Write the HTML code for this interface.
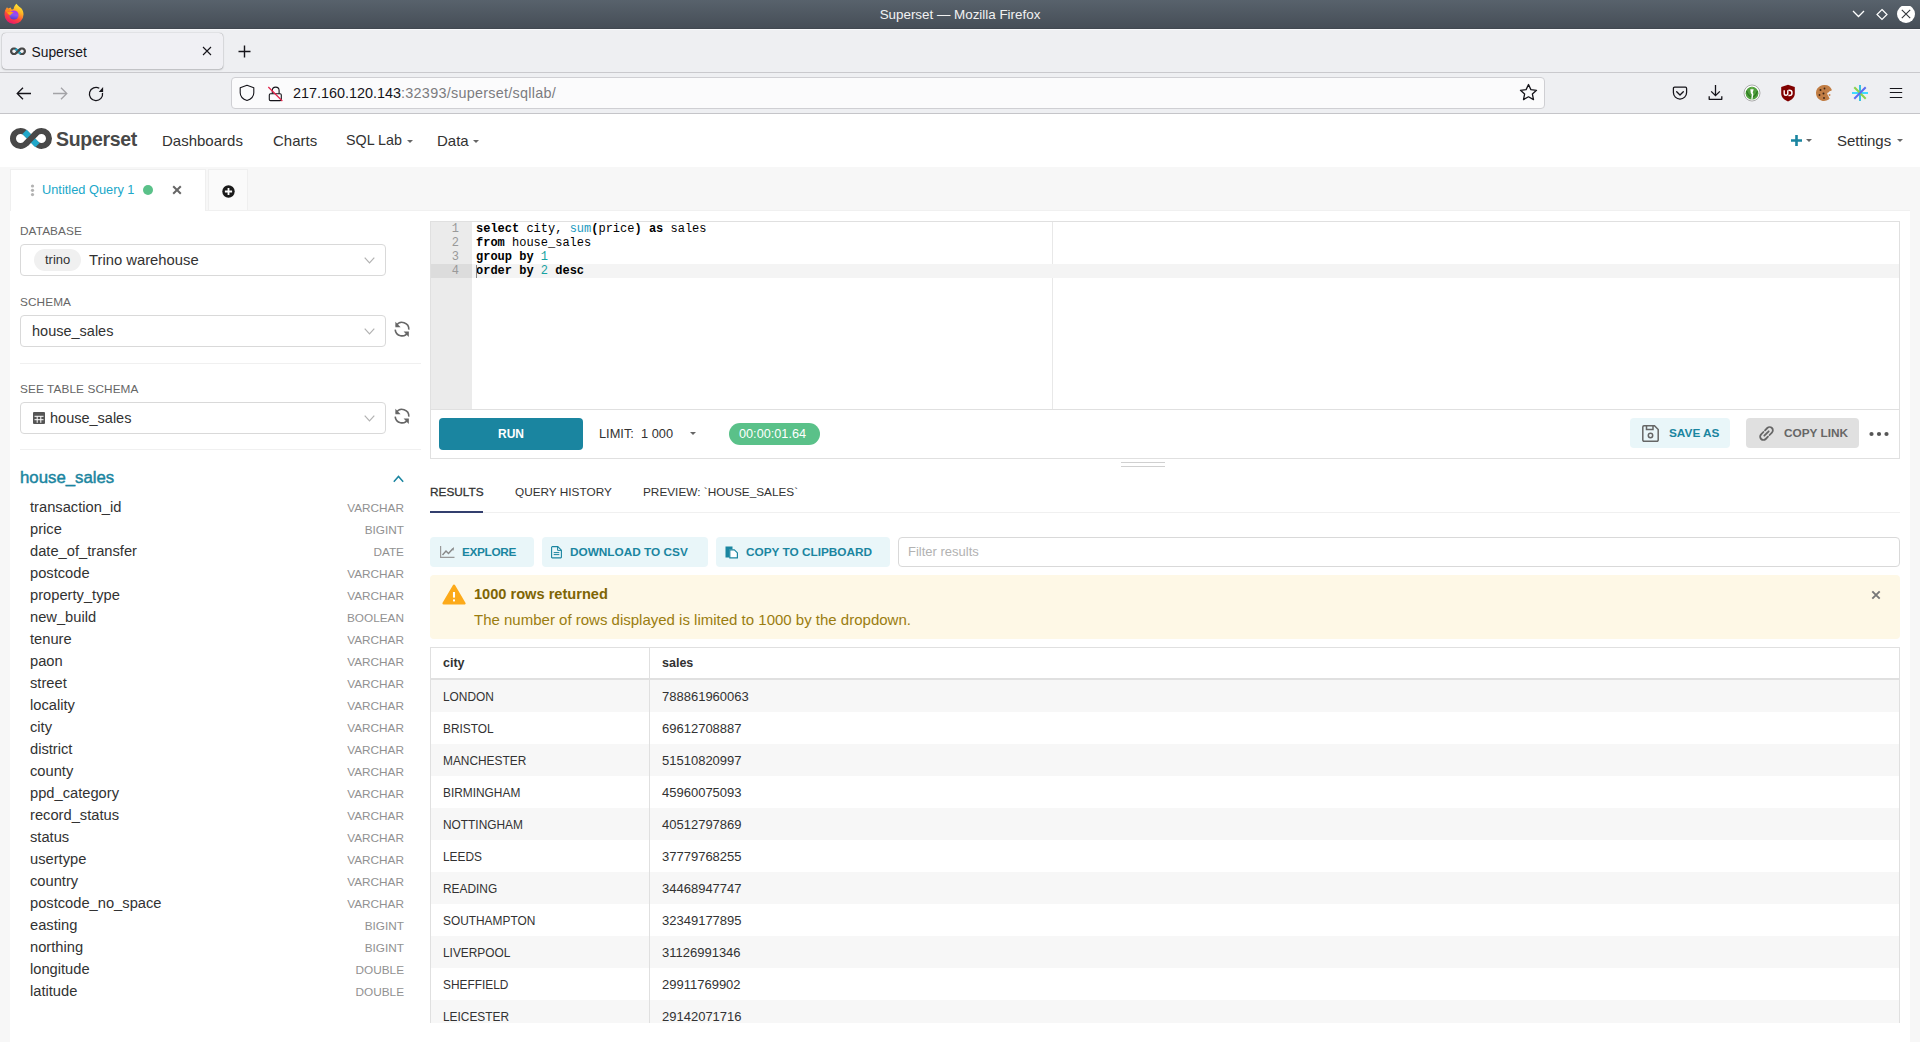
<!DOCTYPE html>
<html><head><meta charset="utf-8">
<style>
*{box-sizing:border-box;margin:0;padding:0}
html,body{width:1920px;height:1042px;overflow:hidden;background:#f7f7f7;font-family:"Liberation Sans",sans-serif;color:#323232}
.a{position:absolute}
.t{position:absolute;white-space:pre;line-height:1}
/* firefox chrome */
#titlebar{left:0;top:0;width:1920px;height:29px;background:linear-gradient(#58626c,#464e57);border-bottom:1px solid #414850}
#tabbar{left:0;top:29px;width:1920px;height:44px;background:#eeeff2;border-top:1px solid #f9f9fb;border-bottom:1px solid #c9c9cd}
#navbar{left:0;top:73px;width:1920px;height:41px;background:#eeeff2;border-bottom:1px solid #c5c5c9}
#ffTab{left:2px;top:33px;width:221px;height:36px;background:#f0f0f4;border-radius:4px;box-shadow:0 0 1px rgba(0,0,0,.45),0 1px 2px rgba(0,0,0,.2)}
#urlbar{left:231px;top:77px;width:1314px;height:32px;background:#fbfbfc;border:1px solid #cfcfd3;border-radius:4px}
/* superset header */
#sshead{left:0;top:114px;width:1920px;height:53px;background:#fff}
.menu{font-size:15px;color:#323232}
.lbl{position:absolute;white-space:pre;line-height:1;font-size:11.8px;color:#666;letter-spacing:0.1px}
.sel{position:absolute;left:20px;width:366px;height:32px;border:1px solid #d9d9d9;border-radius:4px;background:#fff}
.chev{position:absolute;left:364px;width:11px;height:7px}
.col{position:absolute;left:30px;white-space:pre;line-height:1;font-size:14.7px;color:#323232}
.typ{position:absolute;right:1516px;white-space:pre;line-height:1;font-size:11.8px;color:#919191}
.code{position:absolute;left:476px;white-space:pre;font-family:"Liberation Mono",monospace;font-size:12px;line-height:14px;color:#000}
.code b{font-weight:700}
.gn{position:absolute;left:431px;width:28px;text-align:right;font-family:"Liberation Mono",monospace;font-size:12px;line-height:14px;color:#999}
.btxt{position:absolute;white-space:pre;line-height:1;font-size:11.8px;font-weight:700}
.rtab{position:absolute;top:486.5px;white-space:pre;line-height:1;font-size:11.8px;color:#323232}
.abtn{position:absolute;top:537px;height:30px;background:#e9f6f9;border-radius:4px}
.cell{position:absolute;white-space:pre;line-height:1;font-size:11.9px;color:#323232;margin-top:1px}
.num{position:absolute;left:662px;white-space:pre;line-height:1;font-size:13px;color:#323232;margin-top:-1px}
.caret{position:absolute;width:0;height:0;border-left:3.3px solid transparent;border-right:3.3px solid transparent;border-top:3.8px solid #666}
/* content */
#white{left:10px;top:210px;width:1900px;height:832px;background:#fff}
</style></head>
<body>
<svg width="0" height="0" style="position:absolute"><defs>
<symbol id="logo" viewBox="0 0 42 21">
<path d="M15.86 5.25L26.14 15.75A7.5 7.5 0 1 0 26.14 5.25L15.86 15.75A7.5 7.5 0 1 1 15.86 5.25Z" fill="none" stroke="#484848" stroke-width="6" stroke-linejoin="round"/>
<path d="M14.5 3.9L27.5 17.1" stroke="#20a7c9" stroke-width="6"/>
<path d="M26.14 5.25L15.86 15.75" stroke="#484848" stroke-width="6"/>
</symbol>
</defs></svg>
<!-- ================= FIREFOX CHROME ================= -->
<div id="titlebar" class="a"></div>
<div class="t" style="left:0;width:1920px;text-align:center;top:7.5px;font-size:13.4px;color:#f2f2f2">Superset — Mozilla Firefox</div>
<div id="tabbar" class="a"></div>
<div id="navbar" class="a"></div>
<div id="ffTab" class="a"></div>
<div id="urlbar" class="a"></div>
<!-- firefox logo -->
<svg class="a" style="left:0;top:0" width="30" height="28" viewBox="0 0 30 28">
<defs><linearGradient id="ffg" x1="0.8" y1="0" x2="0.3" y2="1"><stop offset="0" stop-color="#fff339"/><stop offset="0.35" stop-color="#ffb224"/><stop offset="0.65" stop-color="#ff4a3a"/><stop offset="1" stop-color="#e8136f"/></linearGradient>
<linearGradient id="ffp" x1="0.6" y1="0" x2="0.4" y2="1"><stop offset="0" stop-color="#b52ee8"/><stop offset="0.5" stop-color="#8a55f5"/><stop offset="1" stop-color="#4f3ccc"/></linearGradient></defs>
<path d="M16.5 3.8C18 6 20 7.5 21.5 8.5 23 10.5 23.5 12.5 23.5 14.5A9.5 9.5 0 0 1 4.5 14.5C4.5 11 5.5 9 7 7.2L8.2 8.6 10.6 7.6 11.6 9.4C12.5 9.6 13 9.6 13.6 9.1 14 6.5 15 5 16.5 3.8Z" fill="url(#ffg)"/>
<circle cx="14" cy="15" r="4.6" fill="url(#ffp)"/>
<path d="M6.8 12.4C9 11.6 11.2 11.6 13.9 12.5 12.2 13.3 11 14.2 10.3 15.4 9 14.6 7.8 13.6 6.8 12.4Z" fill="#ffa414"/>
<path d="M5.5 10.5C7 9 9 8.6 11 9.8 9.5 10.4 8 11 6.8 12.4Z" fill="#ff8a1a"/>
</svg>
<!-- window controls -->
<svg class="a" style="left:1850px;top:6px" width="70" height="18" viewBox="0 0 70 18">
<path d="M3 5l5.5 5.5L14 5" fill="none" stroke="#fff" stroke-width="1.3"/>
<path d="M32 3.5l5 5-5 5-5-5z" fill="none" stroke="#fff" stroke-width="1.2"/>
<circle cx="56" cy="8" r="9" fill="#fff"/>
<path d="M51.8 3.8l8.4 8.4M60.2 3.8l-8.4 8.4" stroke="#31363b" stroke-width="1.1"/>
</svg>
<!-- tab content -->
<svg class="a" style="left:10px;top:46.5px" width="16" height="8.5" viewBox="0 0 42 21"><use href="#logo"/></svg>
<div class="t" style="left:31.5px;top:46px;font-size:13.8px;color:#15141a">Superset</div>
<svg class="a" style="left:202px;top:46px" width="10" height="10" viewBox="0 0 10 10"><path d="M1 1l8 8M9 1l-8 8" stroke="#15141a" stroke-width="1.1"/></svg>
<svg class="a" style="left:238px;top:45px" width="13" height="13" viewBox="0 0 13 13"><path d="M6.5 0.5v12M0.5 6.5h12" stroke="#15141a" stroke-width="1.4"/></svg>
<!-- nav buttons -->
<svg class="a" style="left:0;top:73px" width="290" height="40" viewBox="0 73 290 40">
<path d="M17 93.5h14M23 87.7L17.2 93.5 23 99.3" fill="none" stroke="#15141a" stroke-width="1.3"/>
<path d="M53 93.5h14M61 87.7l5.8 5.8-5.8 5.8" fill="none" stroke="#a3a3a7" stroke-width="1.3"/>
<path d="M102.5 92.85A6.6 6.6 0 1 1 99.3 88.28" fill="none" stroke="#15141a" stroke-width="1.3"/>
<path d="M98.8 91.9L103.1 86.9v5z" fill="#15141a"/>
<path d="M247 85.3l-6.8 2.5v4.9c0 3.5 2.6 6.4 6.8 7.8 4.2-1.4 6.8-4.3 6.8-7.8v-4.9z" fill="none" stroke="#15141a" stroke-width="1.1" stroke-linejoin="round"/>
<path d="M272.3 93.8v-3.3a3.4 3.4 0 0 1 6.8 0v3.3" fill="none" stroke="#15141a" stroke-width="1.1"/>
<rect x="269.3" y="93.8" width="12" height="6.8" rx="1.2" fill="none" stroke="#15141a" stroke-width="1.1"/>
<path d="M268.3 87l14 14" stroke="#e2234a" stroke-width="1.2"/>
</svg>
<div class="t" style="left:293px;top:85.5px;font-size:14.4px;color:#15141a">217.160.120.143<span style="color:#7c7c80;letter-spacing:0.27px">:32393/superset/sqllab/</span></div>
<svg class="a" style="left:1519px;top:83px" width="19" height="19" viewBox="0 0 19 19"><path d="M9.5 1.5l2.4 5.1 5.6.7-4.1 3.8 1.1 5.5-5-2.8-5 2.8 1.1-5.5L1.5 7.3l5.6-.7z" fill="none" stroke="#15141a" stroke-width="1.3" stroke-linejoin="round"/></svg>
<!-- right toolbar icons -->
<svg class="a" style="left:1672px;top:86px" width="16" height="15" viewBox="0 0 16 15"><path d="M2.6 1.2h10.8a1.2 1.2 0 0 1 1.2 1.2v4.1a6.6 6.6 0 0 1-13.2 0V2.4a1.2 1.2 0 0 1 1.2-1.2z" fill="none" stroke="#15141a" stroke-width="1.25"/><path d="M4.7 5.8L8 9l3.3-3.2" fill="none" stroke="#15141a" stroke-width="1.35" stroke-linecap="round" stroke-linejoin="round"/></svg>
<svg class="a" style="left:1708px;top:84px" width="15" height="17" viewBox="0 0 15 17"><path d="M7.5 1v10.6M3.2 7.4l4.3 4.3 4.3-4.3" fill="none" stroke="#15141a" stroke-width="1.3"/><path d="M1.2 12.2v3.1h12.6v-3.1" fill="none" stroke="#15141a" stroke-width="1.3" stroke-linejoin="round"/></svg>
<svg class="a" style="left:1743px;top:84px" width="18" height="18" viewBox="0 0 18 18"><circle cx="9" cy="9" r="8" fill="#fff" stroke="#8a8a8a" stroke-width="0.7"/><circle cx="9" cy="9.2" r="6.4" fill="#4e9e3c"/><path d="M3.5 7c1 3 2.5 5 4.5 6M14.5 7c-1 3-2.5 5-4.5 6" fill="none" stroke="#2f7a22" stroke-width="1.2"/><path d="M7.3 5.2h3.4l-1 3.3.7 1.5-1 5.5H8.3l.5-5-1-1.6z" fill="#fff"/><circle cx="9" cy="3.9" r="1.1" fill="#6ab04c"/></svg>
<svg class="a" style="left:1780px;top:84px" width="16" height="18" viewBox="0 0 16 18"><path d="M8 .8L14.8 3v6.2c0 3.8-2.8 6.8-6.8 8.2C4 16 1.2 13 1.2 9.2V3z" fill="#800000"/><path d="M4.2 6.3v3.2a1.8 1.8 0 0 0 3.6 0V6.3" fill="none" stroke="#fff" stroke-width="1.4"/><path d="M8.4 6.3h1a2.6 2.6 0 0 1 0 5.2h-1" fill="none" stroke="#fff" stroke-width="1.4"/></svg>
<svg class="a" style="left:1815px;top:84px" width="18" height="18" viewBox="0 0 18 18"><path d="M9 1a8 8 0 1 0 5.8 13.5c-.6-.4-1-1-.8-1.7-.9-.2-1.3-1-1-1.8-.8-.4-1-1.2-.6-2 .3-.6 1-.9 1.6-.8.2-.8.9-1.3 1.7-1.2.3-.5.8-.8 1.3-.8A8 8 0 0 0 9 1z" fill="#c17d44"/><circle cx="5.5" cy="6" r="1" fill="#3b2314"/><circle cx="9.5" cy="4.5" r=".9" fill="#3b2314"/><circle cx="8.5" cy="9.5" r="1" fill="#3b2314"/><circle cx="4.5" cy="11" r=".9" fill="#3b2314"/><circle cx="9" cy="14" r=".9" fill="#3b2314"/><circle cx="14.5" cy="11" r="1" fill="#c98a55"/></svg>
<svg class="a" style="left:1851px;top:84px" width="18" height="18" viewBox="0 0 18 18"><path d="M9 1v16" stroke="#38c3e0" stroke-width="2"/><path d="M1 9h16" stroke="#3fd9ff" stroke-width="2"/><path d="M3.3 3.3l11.4 11.4" stroke="#8bd24b" stroke-width="2"/><path d="M14.7 3.3L3.3 14.7" stroke="#5b6cf0" stroke-width="2"/></svg>
<svg class="a" style="left:1889px;top:87px" width="14" height="12" viewBox="0 0 14 12"><path d="M.8 1.5h12.4M.8 5.5h12.4M.8 10.5h12.4" stroke="#15141a" stroke-width="1.2"/></svg>

<!-- ================= SUPERSET HEADER ================= -->
<div id="sshead" class="a"></div>
<svg class="a" style="left:10px;top:128px" width="42" height="21" viewBox="0 0 42 21"><use href="#logo"/></svg>
<div class="t" style="left:56px;top:129.5px;font-size:19.5px;font-weight:700;color:#484848;letter-spacing:-0.3px">Superset</div>
<div class="t menu" style="left:162px;top:133px">Dashboards</div>
<div class="t menu" style="left:273px;top:133px">Charts</div>
<div class="t menu" style="left:346px;top:133px;font-size:14.3px">SQL Lab</div>
<div class="caret" style="left:407px;top:139.5px"></div>
<div class="t menu" style="left:437px;top:133px">Data</div>
<div class="caret" style="left:473px;top:139.5px"></div>
<svg class="a" style="left:1790px;top:134px" width="13" height="13" viewBox="0 0 13 13"><path d="M6.5 1v11M1 6.5h11" stroke="#1a85a0" stroke-width="2.6"/></svg>
<div class="caret" style="left:1806px;top:139px"></div>
<div class="t menu" style="left:1837px;top:133px">Settings</div>
<div class="caret" style="left:1897px;top:139px"></div>

<!-- ================= CONTENT ================= -->
<div id="white" class="a"></div>
<!-- query tabs -->
<div class="a" style="left:10px;top:169px;width:196px;height:42px;background:#fff;border:1px solid #efefef;border-bottom:none"></div>
<div class="a" style="left:208px;top:169px;width:40px;height:42px;background:#fafafa;border:1px solid #efefef;border-bottom:none"></div>
<div class="a" style="left:206px;top:210px;width:1704px;height:1px;background:#f0f0f0"></div>
<svg class="a" style="left:30px;top:184px" width="5" height="13" viewBox="0 0 5 13"><circle cx="2.5" cy="2" r="1.6" fill="#b2b2b2"/><circle cx="2.5" cy="6.3" r="1.6" fill="#b2b2b2"/><circle cx="2.5" cy="10.6" r="1.6" fill="#b2b2b2"/></svg>
<div class="t" style="left:42px;top:184px;font-size:12.8px;color:#20a7c9">Untitled Query 1</div>
<div class="a" style="left:143px;top:185px;width:10px;height:10px;border-radius:50%;background:#5ac189"></div>
<svg class="a" style="left:172px;top:185px" width="10" height="10" viewBox="0 0 10 10"><path d="M1.2 1.2l7.6 7.6M8.8 1.2l-7.6 7.6" stroke="#666" stroke-width="2"/></svg>
<svg class="a" style="left:221.5px;top:184.5px" width="13" height="13" viewBox="0 0 13 13"><circle cx="6.5" cy="6.5" r="6.2" fill="#1a1a1a"/><path d="M6.5 2.9v7.2M2.9 6.5h7.2" stroke="#fff" stroke-width="1.8"/></svg>

<!-- left panel -->
<div class="lbl" style="left:20px;top:226px">DATABASE</div>
<div class="sel" style="top:244px"></div>
<div class="a" style="left:34px;top:249px;width:47px;height:22px;border-radius:11px;background:#f0f0f0"></div>
<div class="t" style="left:45px;top:253px;font-size:13px;color:#323232">trino</div>
<div class="t" style="left:89px;top:253px;font-size:14.8px;color:#323232">Trino warehouse</div>
<svg class="chev" style="top:257px" viewBox="0 0 11 7"><path d="M.7 .7L5.5 5.8 10.3 .7" fill="none" stroke="#b2b2b2" stroke-width="1.2"/></svg>

<div class="lbl" style="left:20px;top:297px">SCHEMA</div>
<div class="sel" style="top:315px"></div>
<div class="t" style="left:32px;top:324px;font-size:14.5px;color:#323232">house_sales</div>
<svg class="chev" style="top:328px" viewBox="0 0 11 7"><path d="M.7 .7L5.5 5.8 10.3 .7" fill="none" stroke="#b2b2b2" stroke-width="1.2"/></svg>
<svg class="a" style="left:392.9px;top:319.8px" width="18" height="18" viewBox="0 0 18 18"><path d="M3.2 5.6A6.8 6.8 0 0 1 15.8 9.6" fill="none" stroke="#666" stroke-width="1.6"/><path d="M2.2 9.6A6.8 6.8 0 0 0 14.9 12.4" fill="none" stroke="#666" stroke-width="1.6"/><path d="M2.4 1.8v5.4h5.2z" fill="#666"/><path d="M15.8 17v-5.4h-5.2z" fill="#666"/></svg>
<div class="a" style="left:20px;top:363px;width:401px;height:1px;background:#f0f0f0"></div>

<div class="lbl" style="left:20px;top:384px">SEE TABLE SCHEMA</div>
<div class="sel" style="top:402px"></div>
<svg class="a" style="left:33px;top:412px" width="12" height="12" viewBox="0 0 12 12"><rect x="0" y="0" width="12" height="12" rx="1" fill="#555"/><path d="M1.5 4.3h9M1.5 7.7h9M4.2 4.3v6.5M7.8 4.3v6.5" stroke="#fff" stroke-width="1"/></svg>
<div class="t" style="left:50px;top:411px;font-size:14.5px;color:#323232">house_sales</div>
<svg class="chev" style="top:415px" viewBox="0 0 11 7"><path d="M.7 .7L5.5 5.8 10.3 .7" fill="none" stroke="#b2b2b2" stroke-width="1.2"/></svg>
<svg class="a" style="left:392.9px;top:406.8px" width="18" height="18" viewBox="0 0 18 18"><path d="M3.2 5.6A6.8 6.8 0 0 1 15.8 9.6" fill="none" stroke="#666" stroke-width="1.6"/><path d="M2.2 9.6A6.8 6.8 0 0 0 14.9 12.4" fill="none" stroke="#666" stroke-width="1.6"/><path d="M2.4 1.8v5.4h5.2z" fill="#666"/><path d="M15.8 17v-5.4h-5.2z" fill="#666"/></svg>
<div class="a" style="left:20px;top:449px;width:401px;height:1px;background:#f0f0f0"></div>

<div class="t" style="left:20px;top:470px;font-size:16.8px;font-weight:400;-webkit-text-stroke:0.45px #1a85a0;color:#1a85a0">house_sales</div>

<!-- editor -->
<div class="a" style="left:430px;top:221px;width:1470px;height:238px;border:1px solid #e0e0e0"></div>
<div class="a" style="left:431px;top:222px;width:41px;height:187px;background:#ebebeb"></div>
<div class="a" style="left:1052px;top:222px;width:1px;height:187px;background:#e8e8e8"></div>
<div class="a" style="left:431px;top:264px;width:41px;height:14px;background:#dcdcdc"></div>
<div class="a" style="left:472px;top:264px;width:1427px;height:14px;background:#f4f4f4"></div>
<div class="a" style="left:431px;top:409px;width:1469px;height:1px;background:#e0e0e0"></div>
<div class="gn" style="top:222px">1</div>
<div class="gn" style="top:236px">2</div>
<div class="gn" style="top:250px">3</div>
<div class="gn" style="top:264px">4</div>
<div class="code" style="top:222px"><b>select</b> city, <span style="color:#1a9ac0">sum</span><b>(</b>price<b>)</b> <b>as</b> sales</div>
<div class="code" style="top:236px"><b>from</b> house_sales</div>
<div class="code" style="top:250px"><b>group</b> <b>by</b> <span style="color:#17a2a2">1</span></div>
<div class="code" style="top:264px"><b>order</b> <b>by</b> <span style="color:#17a2a2">2</span> <b>desc</b></div>
<div class="a" style="left:476px;top:265px;width:1px;height:13px;background:#888"></div>

<!-- toolbar -->
<div class="a" style="left:439px;top:418px;width:144px;height:32px;background:#1a85a0;border-radius:4px"></div>
<div class="btxt" style="left:498px;top:428px;color:#fff;font-size:12px">RUN</div>
<div class="t" style="left:599px;top:428px;font-size:12.8px;color:#323232">LIMIT:</div>
<div class="t" style="left:641px;top:428px;font-size:12.8px;color:#323232">1 000</div>
<div class="caret" style="left:690px;top:432px"></div>
<div class="a" style="left:729px;top:423px;width:91px;height:22px;background:#5ac189;border-radius:11px"></div>
<div class="t" style="left:739px;top:428px;font-size:12.7px;color:#fff">00:00:01.64</div>

<div class="a" style="left:1630px;top:418px;width:100px;height:30px;background:#e9f6f9;border-radius:4px"></div>
<svg class="a" style="left:1641px;top:424px" width="19" height="19" viewBox="0 0 19 19"><path d="M3 1.8h10.5l3.7 3.7V16a1.2 1.2 0 0 1-1.2 1.2H3A1.2 1.2 0 0 1 1.8 16V3A1.2 1.2 0 0 1 3 1.8z" fill="none" stroke="#666" stroke-width="1.5"/><path d="M5.5 2v3.5h6.5V2" fill="none" stroke="#666" stroke-width="1.5"/><circle cx="9.5" cy="11.5" r="2.2" fill="none" stroke="#666" stroke-width="1.5"/></svg>
<div class="btxt" style="left:1669px;top:428px;color:#1a85a0">SAVE AS</div>
<div class="a" style="left:1746px;top:418px;width:113px;height:30px;background:#e0e0e0;border-radius:4px"></div>
<svg class="a" style="left:1757px;top:424px" width="19" height="19" viewBox="0 0 19 19"><path d="M8 6.3l2.3-2.3a3.2 3.2 0 0 1 4.6 4.6L12.6 11" fill="none" stroke="#666" stroke-width="1.8" stroke-linecap="round"/><path d="M11 12.7l-2.3 2.3a3.2 3.2 0 0 1-4.6-4.6L6.4 8" fill="none" stroke="#666" stroke-width="1.8" stroke-linecap="round"/><path d="M7.3 11.7l4.4-4.4" stroke="#666" stroke-width="1.8" stroke-linecap="round"/></svg>
<div class="btxt" style="left:1784px;top:428px;color:#666">COPY LINK</div>
<svg class="a" style="left:1869px;top:431px" width="20" height="6" viewBox="0 0 20 6"><circle cx="2.5" cy="3" r="2.1" fill="#555"/><circle cx="10" cy="3" r="2.1" fill="#555"/><circle cx="17.5" cy="3" r="2.1" fill="#555"/></svg>


<!-- results tabs -->
<div class="rtab" style="left:430px;-webkit-text-stroke:0.3px #323232">RESULTS</div>
<div class="rtab" style="left:515px">QUERY HISTORY</div>
<div class="rtab" style="left:643px">PREVIEW: `HOUSE_SALES`</div>
<div class="a" style="left:430px;top:512px;width:1470px;height:1px;background:#f0f0f0"></div>
<div class="a" style="left:430px;top:511px;width:53px;height:2px;background:#333f6e"></div>

<!-- action buttons -->
<div class="abtn" style="left:430px;width:104px"></div>
<svg class="a" style="left:440px;top:546px" width="15" height="12" viewBox="0 0 15 12"><path d="M.6 0v11.4H14.5" fill="none" stroke="#999" stroke-width="1.2"/><path d="M2.5 9L6 5l2.5 2.5L13 2.5" fill="none" stroke="#888" stroke-width="1.4"/><path d="M13.5 1.5l-.5 3" stroke="#888" stroke-width="1"/></svg>
<div class="btxt" style="left:462px;top:547px;color:#1a85a0;letter-spacing:-0.35px">EXPLORE</div>
<div class="abtn" style="left:542px;width:166px"></div>
<svg class="a" style="left:551px;top:546px" width="11" height="12.5" viewBox="0 0 11 12.5"><path d="M1 .6h5.8L10.4 4.2v7.1a.6.6 0 0 1-.6.6H1.2a.6.6 0 0 1-.6-.6V1.2A.6.6 0 0 1 1.2.6z" fill="none" stroke="#1a85a0" stroke-width="1.1"/><path d="M6.6.8v3.6h3.6" fill="none" stroke="#1a85a0" stroke-width="1"/><path d="M2.7 6.6h5.6M2.7 8.6h5.6" stroke="#1a85a0" stroke-width="1"/></svg>
<div class="btxt" style="left:570px;top:547px;color:#1a85a0">DOWNLOAD TO CSV</div>
<div class="abtn" style="left:716px;width:174px"></div>
<svg class="a" style="left:725px;top:546px" width="13" height="12.5" viewBox="0 0 13 12.5"><path d="M.5 .5h7v3H4.5v8H.5z" fill="#1a85a0"/><path d="M4.8 3.8h4.6l3 3v5.1h-7.6z" fill="#fff" stroke="#1a85a0" stroke-width="1.2" stroke-linejoin="round"/></svg>
<div class="btxt" style="left:746px;top:547px;color:#1a85a0">COPY TO CLIPBOARD</div>
<div class="a" style="left:898px;top:537px;width:1002px;height:30px;border:1px solid #d9d9d9;border-radius:4px;background:#fff"></div>
<div class="t" style="left:908px;top:545px;font-size:13px;color:#b2b2b2">Filter results</div>

<!-- alert -->
<div class="a" style="left:430px;top:575px;width:1470px;height:64px;background:#fef8e6;border-radius:4px"></div>
<svg class="a" style="left:442px;top:583px" width="24" height="23" viewBox="0 0 24 23"><path d="M12 2.8L22.3 20.3H1.7z" fill="#fcaa1a" stroke="#fcaa1a" stroke-width="2.6" stroke-linejoin="round"/><path d="M12 9v5.6" stroke="#fff" stroke-width="2.1"/><rect x="11" y="16.4" width="2" height="2" fill="#fff"/></svg>
<div class="t" style="left:474px;top:587px;font-size:14.6px;font-weight:700;color:#7f6504">1000 rows returned</div>
<div class="t" style="left:474px;top:612px;font-size:15px;color:#9a7d10">The number of rows displayed is limited to 1000 by the dropdown.</div>
<svg class="a" style="left:1871px;top:590px" width="10" height="10" viewBox="0 0 10 10"><path d="M1.3 1.3l7.4 7.4M8.7 1.3l-7.4 7.4" stroke="#777" stroke-width="1.9"/></svg>

<!-- table -->
<div class="a" style="left:430px;top:647px;width:1470px;height:376px;border:1px solid #e0e0e0;border-bottom:none"></div>
<div class="a" style="left:431px;top:678px;width:1468px;height:2px;background:#e0e0e0"></div>
<div class="t" style="left:443px;top:657px;font-size:12.5px;font-weight:700;color:#323232">city</div>
<div class="t" style="left:662px;top:657px;font-size:12.5px;font-weight:700;color:#323232">sales</div>
<div class="a" style="left:431px;top:680px;width:1468px;height:32px;background:#f7f7f7"></div>
<div class="cell" style="left:443px;top:691px">LONDON</div><div class="num" style="top:691px">788861960063</div>
<div class="cell" style="left:443px;top:723px">BRISTOL</div><div class="num" style="top:723px">69612708887</div>
<div class="a" style="left:431px;top:744px;width:1468px;height:32px;background:#f7f7f7"></div>
<div class="cell" style="left:443px;top:755px">MANCHESTER</div><div class="num" style="top:755px">51510820997</div>
<div class="cell" style="left:443px;top:787px">BIRMINGHAM</div><div class="num" style="top:787px">45960075093</div>
<div class="a" style="left:431px;top:808px;width:1468px;height:32px;background:#f7f7f7"></div>
<div class="cell" style="left:443px;top:819px">NOTTINGHAM</div><div class="num" style="top:819px">40512797869</div>
<div class="cell" style="left:443px;top:851px">LEEDS</div><div class="num" style="top:851px">37779768255</div>
<div class="a" style="left:431px;top:872px;width:1468px;height:32px;background:#f7f7f7"></div>
<div class="cell" style="left:443px;top:883px">READING</div><div class="num" style="top:883px">34468947747</div>
<div class="cell" style="left:443px;top:915px">SOUTHAMPTON</div><div class="num" style="top:915px">32349177895</div>
<div class="a" style="left:431px;top:936px;width:1468px;height:32px;background:#f7f7f7"></div>
<div class="cell" style="left:443px;top:947px">LIVERPOOL</div><div class="num" style="top:947px">31126991346</div>
<div class="cell" style="left:443px;top:979px">SHEFFIELD</div><div class="num" style="top:979px">29911769902</div>
<div class="a" style="left:431px;top:1000px;width:1468px;height:23px;background:#f7f7f7"></div>
<div class="cell" style="left:443px;top:1011px">LEICESTER</div><div class="num" style="top:1011px">29142071716</div>
<div class="a" style="left:649px;top:648px;width:1px;height:375px;background:#e0e0e0"></div>

<!-- resizer -->
<div class="a" style="left:1121px;top:462px;width:44px;height:1px;background:#d0d0d0"></div>
<div class="a" style="left:1121px;top:466px;width:44px;height:1px;background:#d0d0d0"></div>
<svg class="a" style="left:393px;top:475px" width="11" height="8" viewBox="0 0 11 8"><path d="M.8 6.8L5.5 1.5l4.7 5.3" fill="none" stroke="#1a85a0" stroke-width="1.5"/></svg>
<div class="col" style="top:500px">transaction_id</div><div class="typ" style="top:503px">VARCHAR</div>
<div class="col" style="top:522px">price</div><div class="typ" style="top:525px">BIGINT</div>
<div class="col" style="top:544px">date_of_transfer</div><div class="typ" style="top:547px">DATE</div>
<div class="col" style="top:566px">postcode</div><div class="typ" style="top:569px">VARCHAR</div>
<div class="col" style="top:588px">property_type</div><div class="typ" style="top:591px">VARCHAR</div>
<div class="col" style="top:610px">new_build</div><div class="typ" style="top:613px">BOOLEAN</div>
<div class="col" style="top:632px">tenure</div><div class="typ" style="top:635px">VARCHAR</div>
<div class="col" style="top:654px">paon</div><div class="typ" style="top:657px">VARCHAR</div>
<div class="col" style="top:676px">street</div><div class="typ" style="top:679px">VARCHAR</div>
<div class="col" style="top:698px">locality</div><div class="typ" style="top:701px">VARCHAR</div>
<div class="col" style="top:720px">city</div><div class="typ" style="top:723px">VARCHAR</div>
<div class="col" style="top:742px">district</div><div class="typ" style="top:745px">VARCHAR</div>
<div class="col" style="top:764px">county</div><div class="typ" style="top:767px">VARCHAR</div>
<div class="col" style="top:786px">ppd_category</div><div class="typ" style="top:789px">VARCHAR</div>
<div class="col" style="top:808px">record_status</div><div class="typ" style="top:811px">VARCHAR</div>
<div class="col" style="top:830px">status</div><div class="typ" style="top:833px">VARCHAR</div>
<div class="col" style="top:852px">usertype</div><div class="typ" style="top:855px">VARCHAR</div>
<div class="col" style="top:874px">country</div><div class="typ" style="top:877px">VARCHAR</div>
<div class="col" style="top:896px">postcode_no_space</div><div class="typ" style="top:899px">VARCHAR</div>
<div class="col" style="top:918px">easting</div><div class="typ" style="top:921px">BIGINT</div>
<div class="col" style="top:940px">northing</div><div class="typ" style="top:943px">BIGINT</div>
<div class="col" style="top:962px">longitude</div><div class="typ" style="top:965px">DOUBLE</div>
<div class="col" style="top:984px">latitude</div><div class="typ" style="top:987px">DOUBLE</div>

</body></html>
